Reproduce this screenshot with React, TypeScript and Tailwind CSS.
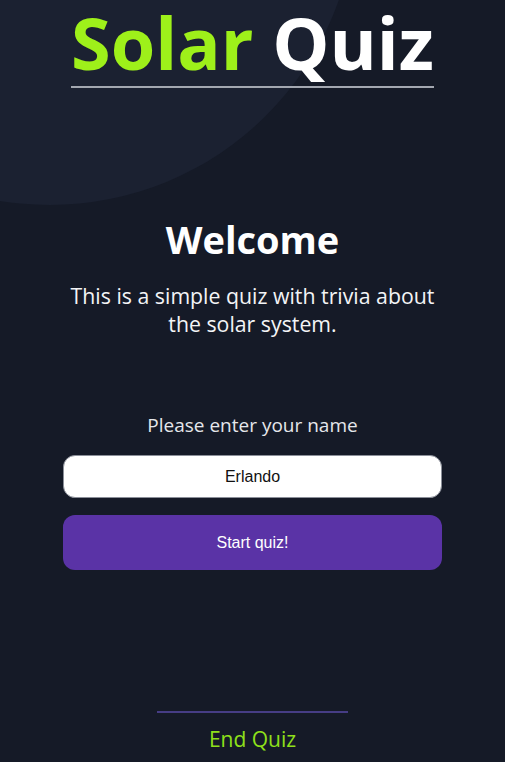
import React, { useState } from "react";

export default function App() {
    const [name, setName] = useState("Erlando");

    return (
        <div
            className="relative min-h-screen overflow-hidden bg-[#151a27] text-white"
            style={{ fontFamily: '"Open Sans", "Noto Sans", sans-serif' }}
        >
            {/* decorative planet glow */}
            <div className="pointer-events-none absolute left-[-256px] top-[-407px] h-[612px] w-[612px] rounded-full bg-[#1b2131]" />

            <div className="relative flex flex-col items-center">
                <h1 className="border-b-2 border-[#a3a7b0] pb-[2px] text-[72px] font-bold leading-[84px]">
                    <span className="text-[#9ef01a]">Solar</span> Quiz
                </h1>

                <main className="mt-[132px] flex w-3/4 flex-col items-center text-center">
                    <h2 className="text-[38px] font-bold leading-none">Welcome</h2>
                    <p className="mt-[24px] text-[21.3px] leading-[28px] text-[#f3f4f6]">
                        This is a simple quiz with trivia about the solar system.
                    </p>

                    <label htmlFor="name" className="mt-[78px] text-[19px] leading-none text-[#e5e7eb]">
                        Please enter your name
                    </label>
                    <input
                        id="name"
                        value={name}
                        onChange={(e) => setName(e.target.value)}
                        className="mt-[20px] h-[43px] w-full rounded-xl border border-[#8b8f99] bg-white text-center text-[16px] text-[#111] focus:outline-none"
                        style={{ fontFamily: '"Liberation Sans", Arial, sans-serif' }}
                    />
                    <button
                        className="mt-[17px] h-[55px] w-full rounded-xl bg-[#5a33a6] text-[16px] text-white"
                        style={{ fontFamily: '"Liberation Sans", Arial, sans-serif' }}
                    >
                        Start quiz!
                    </button>
                </main>

                <button className="mt-[141px] w-[191px] border-t-2 border-[#463d85] pt-[12px] text-[21px] leading-[28px] text-[#8fe01a]">
                    End Quiz
                </button>
            </div>
        </div>
    );
}
